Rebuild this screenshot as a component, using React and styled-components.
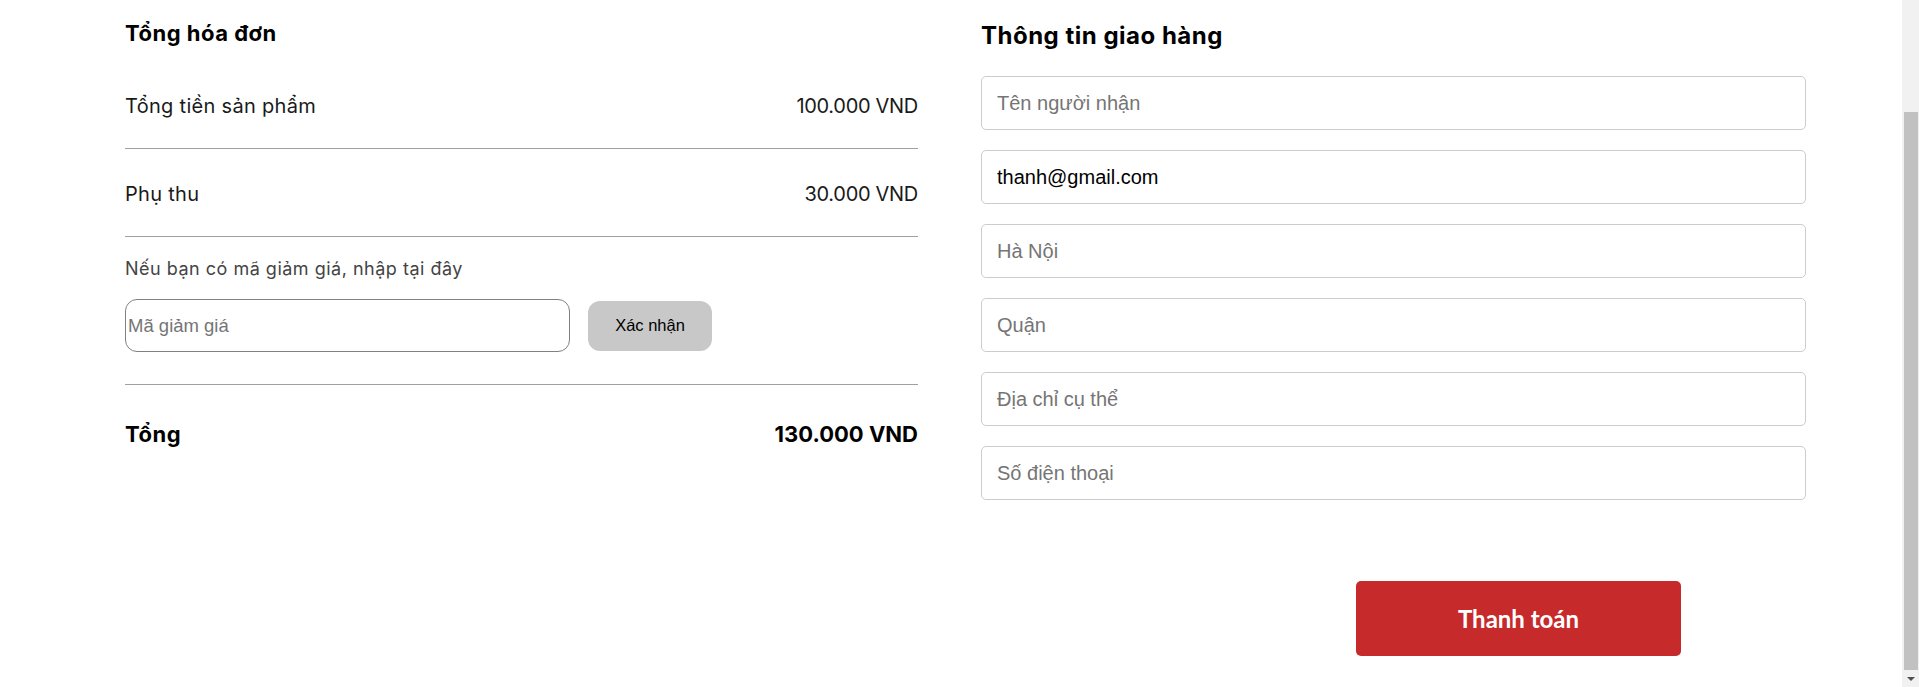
import React from "react";
import styled, { createGlobalStyle } from "styled-components";

const GlobalStyle = createGlobalStyle`
  body {
    margin: 0;
    background: #fff;
    font-family: "Inter", "Liberation Sans", sans-serif;
    color: #111;
    overflow: hidden;
  }
  * {
    box-sizing: border-box;
  }
`;

const Page = styled.div`
  display: flex;
  align-items: flex-start;
  gap: 63px;
  padding: 0 0 31px 125px;
`;

const Summary = styled.section`
  width: 793px;
  padding-top: 19px;
`;

const Shipping = styled.section`
  width: 825px;
  padding-top: 21px;
`;

const Title = styled.h2`
  margin: 0 0 ${(p) => p.$gap}px;
  font-size: ${(p) => p.$size}px;
  line-height: ${(p) => p.$size + 6}px;
  font-weight: 700;
  letter-spacing: 0.5px;
  color: #000;
`;

const Row = styled.div`
  display: flex;
  justify-content: space-between;
  align-items: center;
  height: 88px;
  padding-top: 2px;
  border-bottom: 1px solid #a0a0a0;
  font-size: 20px;
  line-height: 24px;
  color: #1a1a1a;
`;

const Label = styled.span`
  letter-spacing: ${(p) => (p.$bold ? 0.5 : 0.3)}px;
`;

const Amount = styled.span`
  letter-spacing: ${(p) => (p.$bold ? 0 : -0.3)}px;
`;

const Coupon = styled.div`
  padding: 20px 0 32px;
  border-bottom: 1px solid #a0a0a0;
`;

const Hint = styled.p`
  margin: 0;
  font-size: 18px;
  line-height: 23px;
  letter-spacing: 0.5px;
  color: #444;
`;

const CouponForm = styled.div`
  display: flex;
  align-items: center;
  gap: 18px;
  margin-top: 19px;
`;

const CouponInput = styled.input`
  width: 445px;
  height: 53px;
  padding: 0 2px;
  border: 1px solid #808080;
  border-radius: 12px;
  font-family: "Liberation Sans", Arial, sans-serif;
  font-size: 18.5px;
  color: #000;
  outline: none;
  &::placeholder {
    color: #757575;
  }
`;

const ApplyButton = styled.button`
  width: 124px;
  height: 50px;
  border: none;
  border-radius: 12px;
  background: #c8c8c8;
  font-family: "Liberation Sans", Arial, sans-serif;
  font-size: 16.5px;
  color: #000;
  cursor: pointer;
`;

const TotalRow = styled.div`
  display: flex;
  justify-content: space-between;
  align-items: center;
  padding-top: 35px;
  font-size: 22px;
  line-height: 28px;
  font-weight: 700;
  color: #000;
`;

const Fields = styled.div`
  display: flex;
  flex-direction: column;
  gap: 20px;
`;

const Field = styled.input`
  width: 100%;
  height: 54px;
  padding: 0 15px;
  border: 1px solid #cccccc;
  border-radius: 5px;
  font-family: "Liberation Sans", Arial, sans-serif;
  font-size: 20px;
  color: #000;
  outline: none;
  &::placeholder {
    color: #757575;
  }
`;

const PayButton = styled.button`
  display: block;
  width: 325px;
  height: 75px;
  margin: 81px 0 0 375px;
  border: none;
  border-radius: 5px;
  background: #c62a2a;
  color: #fff;
  font-family: "Lato", "Liberation Sans", sans-serif;
  font-size: 24px;
  font-weight: 700;
  cursor: pointer;
`;

/* browser scrollbar, page scrolled to the bottom */
const ScrollTrack = styled.div`
  position: fixed;
  top: 0;
  right: 0;
  width: 17px;
  height: 100vh;
  display: flex;
  flex-direction: column;
  background: #f1f1f1;
`;

const ScrollThumb = styled.div`
  flex: 1;
  margin: 112px 1px 0 2px;
  background: #c1c1c1;
`;

const ScrollArrow = styled.div`
  height: 17px;
  display: flex;
  align-items: center;
  justify-content: center;

  &::after {
    content: "";
    border-left: 4px solid transparent;
    border-right: 4px solid transparent;
    border-top: 4px solid #505050;
  }
`;

const fields = [
  { placeholder: "Tên người nhận" },
  { placeholder: "Email", value: "thanh@gmail.com" },
  { placeholder: "Hà Nội" },
  { placeholder: "Quận" },
  { placeholder: "Địa chỉ cụ thể" },
  { placeholder: "Số điện thoại" },
];

const App = () => {
  return (
    <>
      <GlobalStyle />
      <Page>
        <Summary>
          <Title $size={22} $gap={14}>
            Tổng hóa đơn
          </Title>
          <Row>
            <Label>Tổng tiền sản phẩm</Label>
            <Amount>100.000 VND</Amount>
          </Row>
          <Row>
            <Label>Phụ thu</Label>
            <Amount>30.000 VND</Amount>
          </Row>
          <Coupon>
            <Hint>Nếu bạn có mã giảm giá, nhập tại đây</Hint>
            <CouponForm>
              <CouponInput placeholder="Mã giảm giá" />
              <ApplyButton>Xác nhận</ApplyButton>
            </CouponForm>
          </Coupon>
          <TotalRow>
            <Label $bold>Tổng</Label>
            <Amount $bold>130.000 VND</Amount>
          </TotalRow>
        </Summary>
        <Shipping>
          <Title $size={24} $gap={25}>
            Thông tin giao hàng
          </Title>
          <Fields>
            {fields.map((f) => (
              <Field
                key={f.placeholder}
                placeholder={f.placeholder}
                defaultValue={f.value}
              />
            ))}
          </Fields>
          <PayButton>Thanh toán</PayButton>
        </Shipping>
      </Page>
      <ScrollTrack>
        <ScrollThumb />
        <ScrollArrow />
      </ScrollTrack>
    </>
  );
};

export default App;
